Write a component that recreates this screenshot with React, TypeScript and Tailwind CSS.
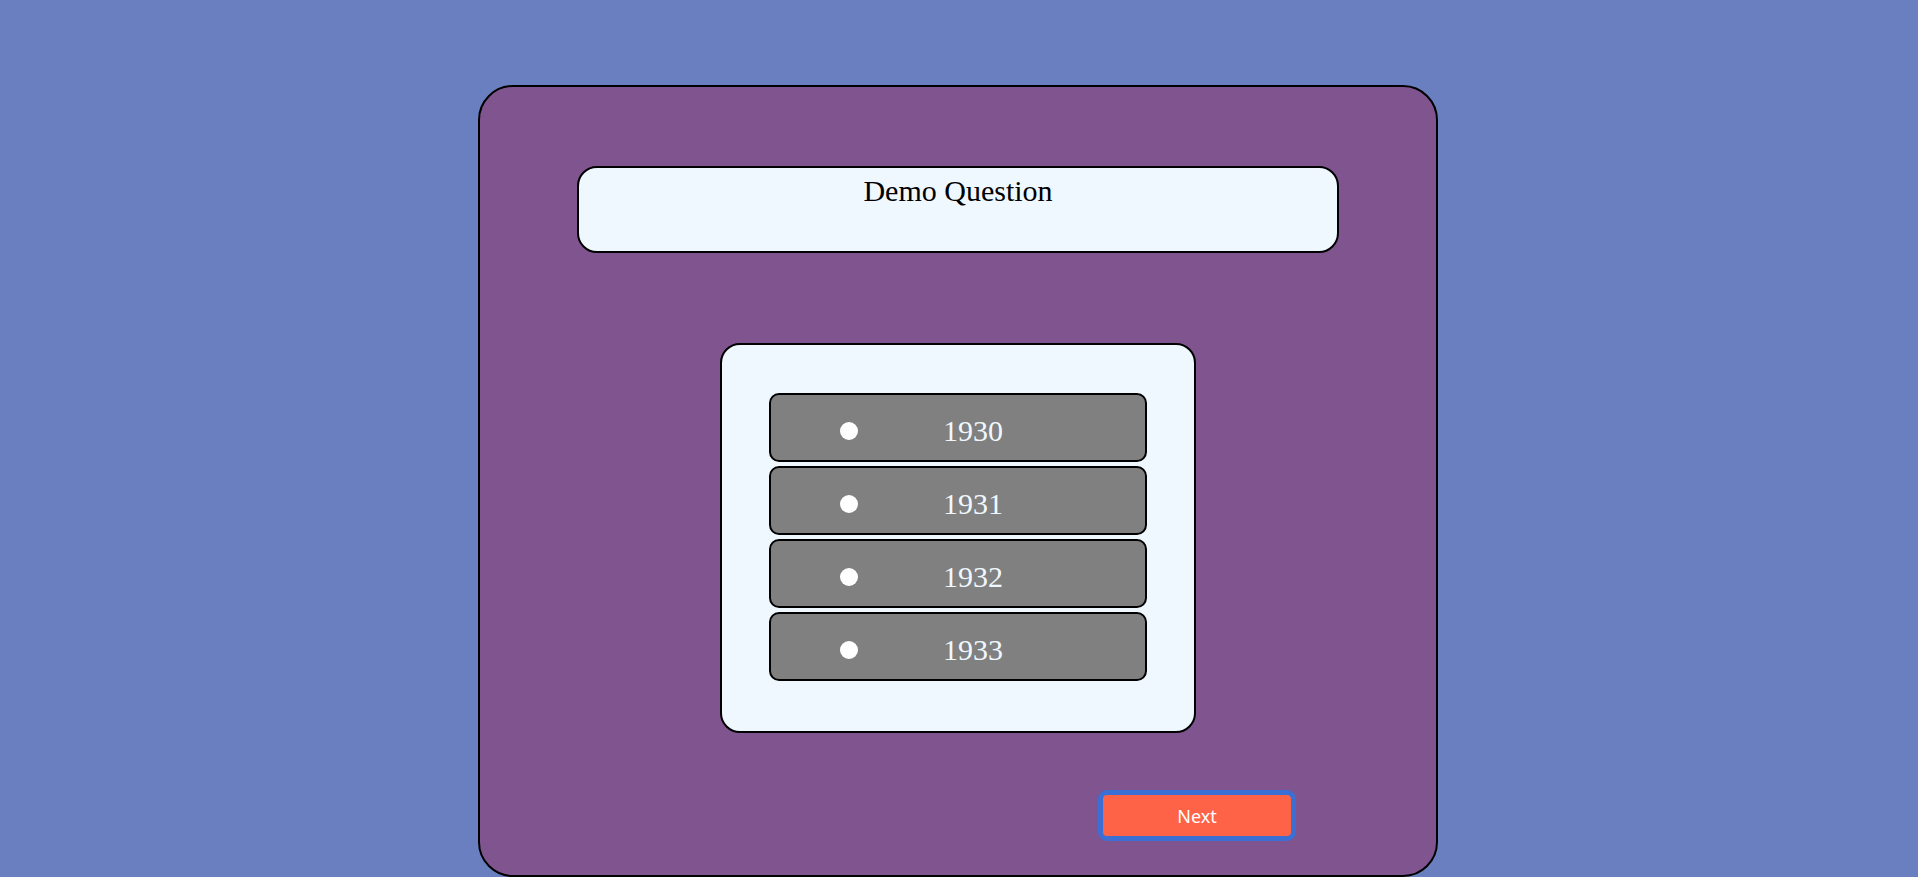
import React from "react";

const options = ["1930", "1931", "1932", "1933"];

export default function App() {
  return (
    <div
      className="h-screen w-full overflow-hidden bg-[#6a7fbf] pt-[85px] pr-[2px] flex justify-center"
      style={{ fontFamily: '"Liberation Serif", "Times New Roman", serif' }}
    >
      <div className="w-[960px] h-[792px] bg-[#80548e] border-2 border-black rounded-[35px] flex flex-col items-center">
        <div className="mt-[79px] w-[762px] h-[87px] bg-[#f0f8ff] border-2 border-black rounded-[20px] text-center text-[30px] leading-[34px] pt-[6px] text-black">
          Demo Question
        </div>

        <div className="mt-[90px] w-[476px] h-[390px] bg-[#f0f8ff] border-2 border-black rounded-[20px] pt-[48px] flex flex-col items-center gap-[4px]">
          {options.map((o) => (
            <label
              key={o}
              className="w-[378px] h-[69px] bg-[#808080] border-2 border-black rounded-[10px] flex items-center pt-[7px]"
            >
              <span className="ml-[69px] w-[18px] h-[18px] rounded-full bg-white shrink-0" />
              <span className="ml-[85px] text-[30px] leading-[34px] text-[#f0f8ff]">{o}</span>
            </label>
          ))}
        </div>

        <button
          className="mt-[57px] self-end mr-[140px] w-[198px] h-[51px] border-[5px] border-[#3b6fd4] rounded-[9px] bg-[#ff6347] text-white text-[18px] flex items-center justify-center pt-[2px]"
          style={{ fontFamily: '"Noto Sans", "Open Sans", sans-serif' }}
        >
          Next
        </button>
      </div>
    </div>
  );
}
